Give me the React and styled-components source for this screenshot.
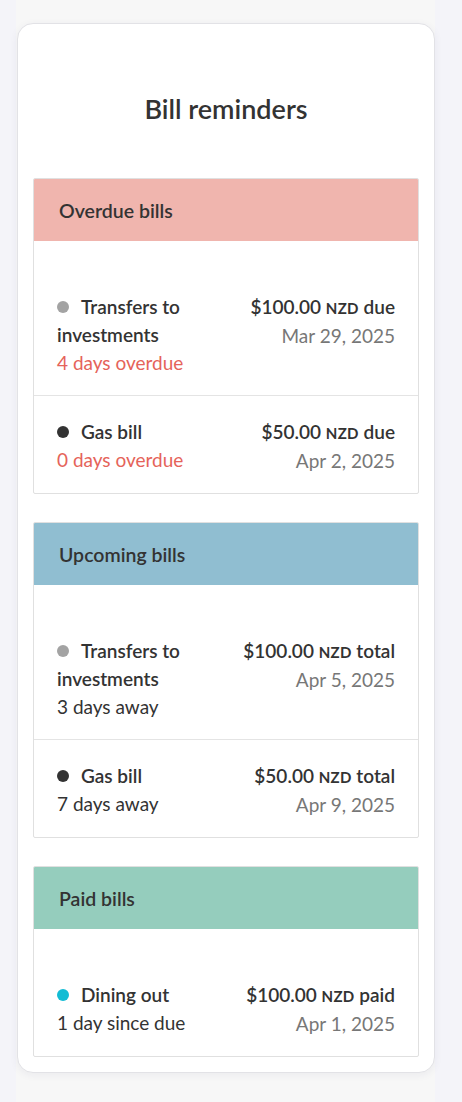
import React from "react";
import styled, { createGlobalStyle } from "styled-components";

const GlobalStyle = createGlobalStyle`
	html, body {
		margin: 0;
		padding: 0;
		background: #f4f4f9;
		font-family: "Lato", "Open Sans", sans-serif;
		color: #333;
	}
`;

const Column = styled.div`
	width: 419px;
	margin-left: 16px;
	min-height: 1102px;
	background: #f7f7f7;
	padding-top: 23px;
	box-sizing: border-box;
`;

const Card = styled.div`
	margin-left: 1px;
	width: 418px;
	box-sizing: border-box;
	background: #fff;
	border: 1px solid #e2e2e6;
	border-radius: 16px;
	box-shadow: 0 2px 8px rgba(40, 40, 80, 0.06);
	padding: 0 15px 15px;
	display: flex;
	flex-direction: column;
	gap: 28px;
`;

const Title = styled.h2`
	margin: 0;
	height: 126px;
	display: flex;
	align-items: center;
	justify-content: center;
	padding-top: 44px;
	padding-bottom: 2px;
	box-sizing: border-box;
	font-size: 27px;
	font-weight: 600;
	color: #333;
`;

const Section = styled.section`
	border: 1px solid #e0e0e0;
	border-radius: 2px;
	background: #fff;
	overflow: hidden;
`;

const SectionHeader = styled.div`
	height: 62px;
	display: flex;
	align-items: center;
	padding: 0 25px;
	background: ${ props => props.tone };
	font-size: 19.5px;
	font-weight: 600;
	color: #333;
`;

const SectionBody = styled.div`
	padding-top: 30px;
`;

const Row = styled.div`
	display: flex;
	justify-content: space-between;
	gap: 16px;
	padding: 22px 23px 18px;
	font-size: 19px;
	line-height: 28px;

	& + & {
		border-top: 1px solid #e4e4e4;
	}
`;

const LeftCol = styled.div`
	max-width: 160px;
`;

const Name = styled.div`
	font-weight: 600;
	color: #333;
`;

const Dot = styled.span`
	display: inline-block;
	width: 12px;
	height: 12px;
	border-radius: 50%;
	background: ${ props => props.color };
	margin-right: 12px;
	vertical-align: 1px;
`;

const Status = styled.div`
	color: ${ props => props.overdue ? "#e5635a" : "#333" };
`;

const RightCol = styled.div`
	text-align: right;
	white-space: nowrap;
`;

const Amount = styled.div`
	font-weight: 600;
	color: #333;
`;

const Currency = styled.span`
	font-size: 15px;
	font-weight: 700;
	letter-spacing: 0.3px;
`;

const DateText = styled.div`
	color: #777;
`;

const sections = [
	{
		title: "Overdue bills",
		tone: "#f0b5ae",
		word: "due",
		overdue: true,
		bills: [
			{ name: "Transfers to investments", dot: "#a3a3a3", amount: "$100.00", status: "4 days overdue", date: "Mar 29, 2025" },
			{ name: "Gas bill", dot: "#333", amount: "$50.00", status: "0 days overdue", date: "Apr 2, 2025" },
		],
	},
	{
		title: "Upcoming bills",
		tone: "#90bed1",
		word: "total",
		bills: [
			{ name: "Transfers to investments", dot: "#a3a3a3", amount: "$100.00", status: "3 days away", date: "Apr 5, 2025" },
			{ name: "Gas bill", dot: "#333", amount: "$50.00", status: "7 days away", date: "Apr 9, 2025" },
		],
	},
	{
		title: "Paid bills",
		tone: "#95cdbd",
		word: "paid",
		bills: [
			{ name: "Dining out", dot: "#12bcd4", amount: "$100.00", status: "1 day since due", date: "Apr 1, 2025" },
		],
	},
];

function BillRow( { bill, word, overdue } ) {
	return <Row>
		<LeftCol>
			<Name><Dot color={ bill.dot } />{ bill.name }</Name>
			<Status overdue={ overdue }>{ bill.status }</Status>
		</LeftCol>
		<RightCol>
			<Amount>{ bill.amount } <Currency>NZD</Currency> { word }</Amount>
			<DateText>{ bill.date }</DateText>
		</RightCol>
	</Row>;
}

export default function App() {
	return <>
		<GlobalStyle />
		<Column>
			<Card>
				<Title>Bill reminders</Title>
				{ sections.map( section => (
					<Section key={ section.title }>
						<SectionHeader tone={ section.tone }>{ section.title }</SectionHeader>
						<SectionBody>
							{ section.bills.map( bill => (
								<BillRow key={ bill.name } bill={ bill } word={ section.word } overdue={ section.overdue } />
							) ) }
						</SectionBody>
					</Section>
				) ) }
			</Card>
		</Column>
	</>;
}
